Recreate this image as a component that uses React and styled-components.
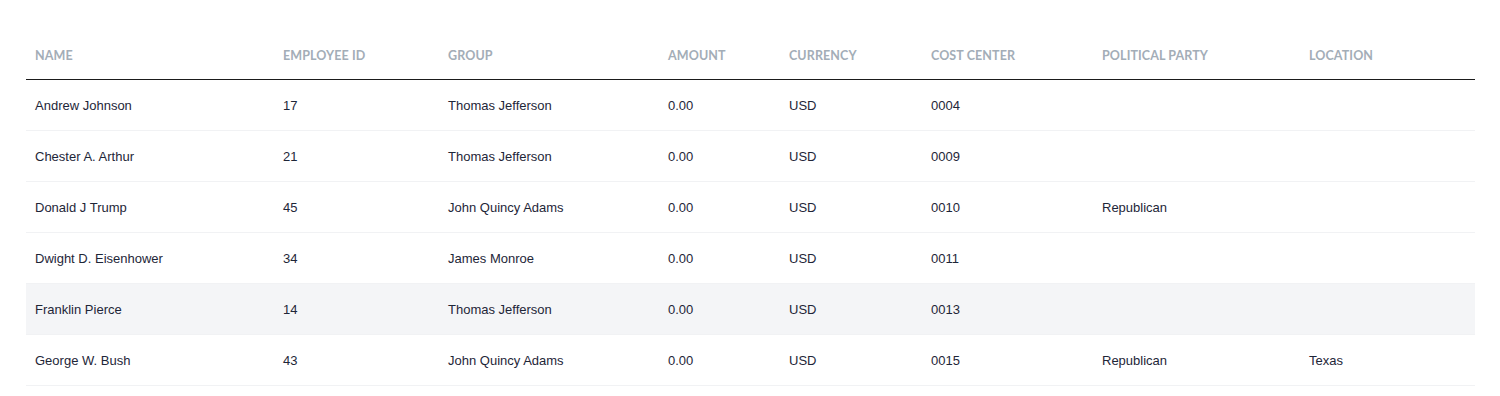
import React from 'react';
import styled, { createGlobalStyle } from 'styled-components';

const GlobalStyle = createGlobalStyle`
  body {
    margin: 0;
    background: #fff;
    font-family: "Liberation Sans", Arial, sans-serif;
  }
`;

const columns = [
  { key: 'name', label: 'Name', width: 248 },
  { key: 'id', label: 'Employee ID', width: 165 },
  { key: 'group', label: 'Group', width: 220 },
  { key: 'amount', label: 'Amount', width: 121 },
  { key: 'currency', label: 'Currency', width: 142 },
  { key: 'costCenter', label: 'Cost Center', width: 171 },
  { key: 'party', label: 'Political Party', width: 207 },
  { key: 'location', label: 'Location', width: 175 },
];

const rows = [
  { name: 'Andrew Johnson', id: '17', group: 'Thomas Jefferson', amount: '0.00', currency: 'USD', costCenter: '0004' },
  { name: 'Chester A. Arthur', id: '21', group: 'Thomas Jefferson', amount: '0.00', currency: 'USD', costCenter: '0009' },
  { name: 'Donald J Trump', id: '45', group: 'John Quincy Adams', amount: '0.00', currency: 'USD', costCenter: '0010', party: 'Republican' },
  { name: 'Dwight D. Eisenhower', id: '34', group: 'James Monroe', amount: '0.00', currency: 'USD', costCenter: '0011' },
  { name: 'Franklin Pierce', id: '14', group: 'Thomas Jefferson', amount: '0.00', currency: 'USD', costCenter: '0013', hovered: true },
  { name: 'George W. Bush', id: '43', group: 'John Quincy Adams', amount: '0.00', currency: 'USD', costCenter: '0015', party: 'Republican', location: 'Texas' },
];

const Page = styled.div`
  padding: 30px 25px 0 26px;
`;

const Table = styled.table`
  width: 1449px;
  border-collapse: collapse;
  table-layout: fixed;
`;

const HeadCell = styled.th`
  height: 47px;
  padding: 2px 9px 0;
  text-align: left;
  vertical-align: middle;
  font-family: Lato, "Open Sans", sans-serif;
  font-weight: 700;
  font-size: 12.5px;
  letter-spacing: 0.1px;
  text-transform: uppercase;
  color: #a3adb7;
  border-bottom: 1.5px solid #1b1b1b;
`;

const Row = styled.tr`
  background: ${({ $hovered }) => ($hovered ? '#f4f5f7' : '#fff')};
  border-bottom: 1px solid #f1f2f4;
`;

const Cell = styled.td`
  height: 50px;
  padding: 0 9px;
  vertical-align: middle;
  font-size: 13px;
  color: #1e2638;
  white-space: nowrap;
`;

export default function App() {
  return (
    <Page>
      <GlobalStyle />
      <Table>
        <colgroup>
          {columns.map((c) => (
            <col key={c.key} style={{ width: c.width }} />
          ))}
        </colgroup>
        <thead>
          <tr>
            {columns.map((c) => (
              <HeadCell key={c.key}>{c.label}</HeadCell>
            ))}
          </tr>
        </thead>
        <tbody>
          {rows.map((r) => (
            <Row key={r.id} $hovered={r.hovered}>
              {columns.map((c) => (
                <Cell key={c.key}>{r[c.key] || ''}</Cell>
              ))}
            </Row>
          ))}
        </tbody>
      </Table>
    </Page>
  );
}
